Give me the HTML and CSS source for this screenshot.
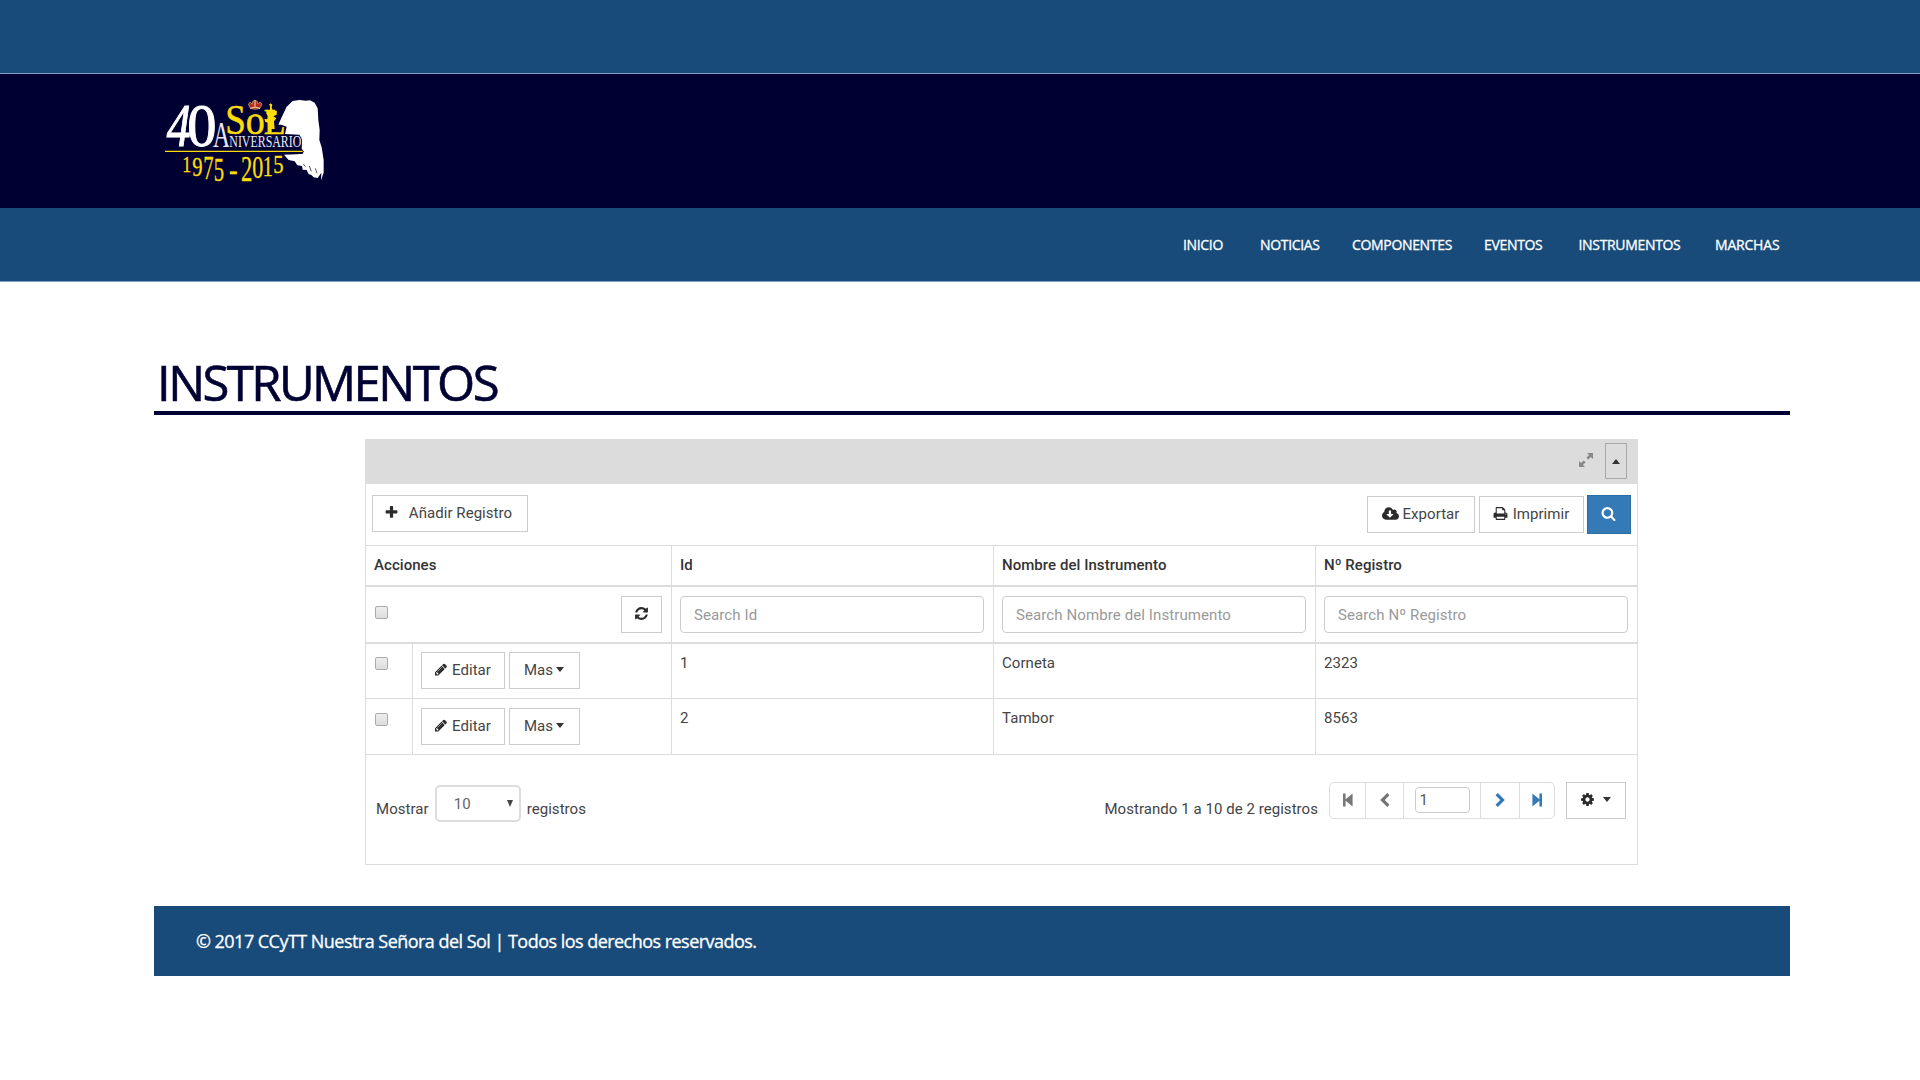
FILE: index.html
```html
<!DOCTYPE html>
<html lang="es">
<head>
<meta charset="utf-8">
<title>Instrumentos</title>
<link rel="stylesheet" href="styles.css">
</head>
<body>
<svg class="sprite" aria-hidden="true">
  <symbol id="plus" viewBox="0 0 1792 1792"><path d="M1600 736v192q0 40-28 68t-68 28h-416v416q0 40-28 68t-68 28h-192q-40 0-68-28t-28-68v-416h-416q-40 0-68-28t-28-68v-192q0-40 28-68t68-28h416v-416q0-40 28-68t68-28h192q40 0 68 28t28 68v416h416q40 0 68 28t28 68z"/></symbol>
  <symbol id="refresh" viewBox="0 0 1792 1792"><path d="M1639 1056q0 5-1 7-64 268-268 434.500t-478 166.500q-146 0-282.500-55t-243.500-157l-129 129q-19 19-45 19t-45-19-19-45v-448q0-26 19-45t45-19h448q26 0 45 19t19 45-19 45l-137 137q71 66 161 102t187 36q134 0 250-65t186-179q11-17 53-117 8-23 30-23h192q13 0 22.500 9.500t9.500 22.500zm25-800v448q0 26-19 45t-45 19h-448q-26 0-45-19t-19-45 19-45l138-138q-148-137-349-137-134 0-250 65t-186 179q-11 17-53 117-8 23-30 23h-199q-13 0-22.500-9.500t-9.500-22.500v-7q65-268 270-434.500t480-166.500q146 0 284 55.500t245 156.500l130-129q19-19 45-19t45 19 19 45z"/></symbol>
  <symbol id="search" viewBox="0 0 1792 1792"><path d="M1216 832q0-185-131.500-316.500t-316.500-131.500-316.500 131.500-131.500 316.500 131.500 316.500 316.500 131.500 316.500-131.500 131.500-316.500zm512 832q0 52-38 90t-90 38q-54 0-90-38l-343-342q-179 124-399 124-143 0-273.500-55.500t-225-150-150-225-55.500-273.500 55.500-273.500 150-225 225-150 273.500-55.500 273.500 55.500 225 150 150 225 55.500 273.500q0 220-124 399l343 343q37 37 37 90z"/></symbol>
  <symbol id="print" viewBox="0 0 1792 1792"><path d="M448 1536h896v-256h-896v256zm0-640h896v-384h-160q-40 0-68-28t-28-68v-160h-640v640zm1152 64q0-26-19-45t-45-19-45 19-19 45 19 45 45 19 45-19 19-45zm128 0v416q0 13-9.500 22.500t-22.500 9.500h-224v160q0 40-28 68t-68 28h-960q-40 0-68-28t-28-68v-160h-224q-13 0-22.500-9.500t-9.500-22.500v-416q0-79 56.500-135.500t135.500-56.500h64v-544q0-40 28-68t68-28h672q40 0 88 20t76 48l152 152q28 28 48 76t20 88v256h64q79 0 135.500 56.500t56.500 135.500z"/></symbol>
  <symbol id="pencil" viewBox="0 0 1792 1792"><path d="M491 1536l91-91-235-235-91 91v107h128v128h107zm523-928q0-22-22-22-10 0-17 7l-542 542q-7 7-7 17 0 22 22 22 10 0 17-7l542-542q7-7 7-17zm-54-192l416 416-832 832h-416v-416zm683 96q0 53-37 90l-166 166-416-416 166-165q36-38 90-38 53 0 91 38l235 234q37 39 37 91z"/></symbol>
  <symbol id="cog" viewBox="0 0 1792 1792"><path d="M1152 896q0-106-75-181t-181-75-181 75-75 181 75 181 181 75 181-75 75-181zm512-109v222q0 12-8 23t-20 13l-185 28q-19 54-39 91 35 50 107 138 10 12 10 25t-9 23q-27 37-99 108t-94 71q-12 0-26-9l-138-108q-44 23-91 38-16 136-29 186-7 28-36 28h-222q-14 0-24.500-8.500t-11.500-21.500l-28-184q-49-16-90-37l-141 107q-10 9-25 9-14 0-25-11-126-114-165-168-7-10-7-23 0-12 8-23 15-21 51-66.500t54-70.500q-27-50-41-99l-183-27q-13-2-21-12.500t-8-23.500v-222q0-12 8-23t19-13l186-28q14-46 39-92-40-57-107-138-10-12-10-24 0-10 9-23 26-36 98.500-107.500t94.500-71.500q13 0 26 10l138 107q44-23 91-38 16-136 29-186 7-28 36-28h222q14 0 24.500 8.500t11.500 21.500l28 184q49 16 90 37l142-107q9-9 24-9 13 0 25 10 129 119 165 170 7 8 7 22 0 12-8 23-15 21-51 66.500t-54 70.500q26 50 41 98l183 28q13 2 21 12.500t8 23.500z"/></symbol>
  <symbol id="cloud" viewBox="-64 0 1920 1792"><path d="M1216 928q0-14-9-23t-23-9h-224v-352q0-13-9.500-22.500t-22.500-9.500h-192q-13 0-22.500 9.500t-9.500 22.500v352h-224q-13 0-22.500 9.500t-9.500 22.500q0 14 9 23l352 352q9 9 23 9t23-9l351-351q10-12 10-24zm640 224q0 159-112.500 271.500t-271.500 112.500h-1088q-185 0-316.500-131.500t-131.500-316.500q0-130 70-240t188-165q-2-30-2-43 0-212 150-362t362-150q156 0 285.500 87t188.500 231q71-62 166-62 106 0 181 75t75 181q0 76-41 138 130 31 213.500 135.500t83.500 238.500z"/></symbol>
  <symbol id="expand" viewBox="0 0 14 14"><path d="M8 0h6v6l-2.100-2.100-2.700 2.700-1.800-1.800 2.700-2.700zM6 14H0V8l2.100 2.100 2.700-2.700 1.800 1.800-2.700 2.700z"/></symbol>
  <symbol id="chevron" viewBox="0 0 10 14"><path d="M7.200 0 9.500 2.300 4.800 7l4.700 4.700L7.200 14 .2 7z"/></symbol>
  <symbol id="step" viewBox="0 0 10 14"><path d="M0 .5h2.600V6.300L9.600.5v13L2.600 7.700v5.800H0z"/></symbol>
</svg>

<header>
  <div class="topbar"></div>
  <div class="brand">
    <svg class="logo" viewBox="66 102 495 270" role="img">
      <path fill="#fff" d="M458 123 478 120 498 122 510 121 524 128 533 145 535 180 539 210 538 240 545 262 551 300 551 338 543 361 544 338 533 354 521 352 513 344 506 343 500 330 488 329 486 318 472 316 464 304 446 300 432 284 470 283 486 281 492 275 485 266 486 240 478 224 435 222 440 200 424 194 415 194 424 174 440 140z"/>
      <path fill="none" stroke="#003" stroke-width="2" d="M508 318l6 16M526 325l5 15M490 312l6 8"/>
      <g font-family="Liberation Serif, serif">
        <g fill="#fff" stroke="#fff" stroke-width="3">
          <text x="80" y="257" font-size="184" font-style="italic" textLength="72" lengthAdjust="spacingAndGlyphs">4</text>
          <text x="142" y="257" font-size="184" textLength="88" lengthAdjust="spacingAndGlyphs">0</text>
        </g>
        <text x="219" y="260" font-size="107" textLength="51" lengthAdjust="spacingAndGlyphs" fill="#e8e8f0">A</text>
        <text x="268" y="260" font-size="49" textLength="216" lengthAdjust="spacingAndGlyphs" fill="#e8e8f0" stroke="#003" stroke-width="6" paint-order="stroke">NIVERSARIO</text>
        <g fill="#fddc0a" stroke="#fddc0a" stroke-width="1.500">
          <text x="256" y="221" font-size="129" textLength="62" lengthAdjust="spacingAndGlyphs">S</text>
          <text x="317" y="221" font-size="120" textLength="57" lengthAdjust="spacingAndGlyphs">o</text>
          <text x="371" y="221" font-size="110" textLength="66" lengthAdjust="spacingAndGlyphs">L</text>
        </g>
      </g>
      <path fill="#fddc0a" d="M384 207 385 188 376 186 373 176 381 178 387 172 378 160 383 149 390 154V138L387 134 392 130 397 134 395 142 399 154 411 152 410 164 400 169 409 175 402 184 404 207z"/>
      <path fill="#b52b20" stroke="#d8b080" stroke-width="2" d="M331 145L325 132 331 127 337 133 338 124 345 121 352 124 354 132 360 126 366 132 360 145Q345 151 331 145z"/>
      <path fill="none" stroke="#f6dfa6" stroke-width="3" d="M331 145Q345 138 360 145M345 120V140"/>
      <path fill="none" stroke="#003" stroke-width="8" d="M430 277H489"/>
      <path fill="none" stroke="#fddc0a" stroke-width="3.500" d="M75 274H488"/>
      <g font-family="Liberation Serif, serif" fill="#fddc0a" stroke="#fddc0a" stroke-width="1">
        <text x="127" y="336" font-size="70" textLength="27" lengthAdjust="spacingAndGlyphs">1</text>
        <text x="157" y="347" font-size="85" textLength="31" lengthAdjust="spacingAndGlyphs">9</text>
        <text x="190" y="357" font-size="98" textLength="31" lengthAdjust="spacingAndGlyphs">7</text>
        <text x="221" y="362" font-size="104" textLength="31" lengthAdjust="spacingAndGlyphs">5</text>
        <text x="267" y="360" font-size="90" textLength="26" lengthAdjust="spacingAndGlyphs">-</text>
        <text x="303" y="362" font-size="106" textLength="34" lengthAdjust="spacingAndGlyphs">2</text>
        <text x="337" y="354" font-size="95" textLength="33" lengthAdjust="spacingAndGlyphs">0</text>
        <text x="368" y="348" font-size="86" textLength="30" lengthAdjust="spacingAndGlyphs">1</text>
        <text x="400" y="338" font-size="74" textLength="31" lengthAdjust="spacingAndGlyphs">5</text>
      </g>
    </svg>
  </div>
  <nav>
    <a class="w1">INICIO</a><a class="w2">NOTICIAS</a><a class="w3">COMPONENTES</a><a class="w4">EVENTOS</a><a class="w5">INSTRUMENTOS</a><a class="w6">MARCHAS</a>
  </nav>
</header>

<main>
  <h1>INSTRUMENTOS</h1>
  <section class="panel">
    <div class="panel-head">
      <svg class="i-expand"><use href="#expand"/></svg>
      <button class="collapse"><span class="caret up"></span></button>
    </div>
    <div class="toolbar">
      <button class="btn add"><svg class="icon"><use href="#plus"/></svg>Añadir Registro</button>
      <div class="tools">
        <button class="btn export"><svg class="icon wide"><use href="#cloud"/></svg>Exportar</button>
        <button class="btn print"><svg class="icon"><use href="#print"/></svg>Imprimir</button>
        <button class="btn find"><svg class="icon"><use href="#search"/></svg></button>
      </div>
    </div>
    <div class="row head"><div>Acciones</div><div>Id</div><div>Nombre del Instrumento</div><div>Nº Registro</div></div>
    <div class="row filter">
      <div class="all"><span class="check"></span><button class="btn reload"><svg class="icon"><use href="#refresh"/></svg></button></div>
      <div><input placeholder="Search Id"></div>
      <div><input placeholder="Search Nombre del Instrumento"></div>
      <div><input placeholder="Search Nº Registro"></div>
    </div>
    <div class="row data">
      <div class="actions"><span class="pick"><span class="check"></span></span><span class="ops"><button class="btn edit"><svg class="icon"><use href="#pencil"/></svg>Editar</button><button class="btn more">Mas<span class="caret"></span></button></span></div>
      <div>1</div><div>Corneta</div><div>2323</div>
    </div>
    <div class="row data last">
      <div class="actions"><span class="pick"><span class="check"></span></span><span class="ops"><button class="btn edit"><svg class="icon"><use href="#pencil"/></svg>Editar</button><button class="btn more">Mas<span class="caret"></span></button></span></div>
      <div>2</div><div>Tambor</div><div>8563</div>
    </div>
    <div class="panel-foot">
      <div class="length"><span>Mostrar</span><span class="select">10<span class="caret tall"></span></span><span>registros</span></div>
      <div class="paging">
        <span class="info">Mostrando 1 a 10 de 2 registros</span>
        <div class="pager">
          <span class="p1"><svg><use href="#step"/></svg></span>
          <span class="p2"><svg><use href="#chevron"/></svg></span>
          <span class="p3"><input value="1"></span>
          <span class="p4 on"><svg><use href="#chevron"/></svg></span>
          <span class="p5 on"><svg><use href="#step"/></svg></span>
        </div>
        <button class="btn settings"><svg class="icon"><use href="#cog"/></svg><span class="caret"></span></button>
      </div>
    </div>
  </section>
</main>
<footer><span>© 2017 CCyTT Nuestra Señora del Sol | Todos los derechos reservados.</span></footer>
</body>
</html>
```
FILE: styles.css
```css
* { box-sizing: border-box; }
body { margin: 0; background: #fff; font-family: "Open Sans", "Noto Sans", sans-serif; }
.sprite { display: none; }
svg { fill: currentColor; flex: none; }

.topbar { height: 74px; background: #184b79; border-bottom: 1px solid #7f9fc4; }
.brand { height: 134px; background: #003; padding: 20px 0 0 162px; }
.logo { display: block; width: 165px; height: 90px; overflow: visible; }
nav { height: 74px; background: #184b79; border-bottom: 1px solid #7f9fc4; display: flex; justify-content: flex-end; align-items: center; padding-right: 133px; color: #fff; font-size: 14px; letter-spacing: -.33px; -webkit-text-stroke: .3px; white-space: nowrap; }
.w1 { width: 77px; }
.w2 { width: 92px; }
.w3 { width: 132px; }
.w4 { width: 94.500px; }
.w5 { width: 136.500px; }
.w6 { width: 72px; letter-spacing: -.2px; }

main { padding: 68px 130px 0 154px; }
h1 { margin: 0; height: 65px; padding-left: 3px; border-bottom: 4px solid #003; color: #003; font-size: 49px; font-weight: 400; line-height: 65px; letter-spacing: -2.550px; -webkit-text-stroke: .6px; }

.panel { width: 1273px; margin: 24px 0 0 211px; border: 1px solid #dcdcdc; font: 15px Roboto, sans-serif; letter-spacing: .05px; color: #444; }
.panel-head { height: 45px; margin-top: -1px; background: #dcdcdc; display: flex; justify-content: flex-end; align-items: center; padding: 0 10px 1px 0; gap: 12px; color: #888; }
.i-expand { width: 14px; height: 14px; margin-bottom: 2px; }
.collapse { width: 22px; height: 36px; padding: 0; background: #dcdcdc; border: 1px solid #aaa; display: flex; align-items: center; justify-content: center; color: #333; }
.caret { border: 4px solid transparent; border-top: 5px solid #333; border-bottom: 0; margin-left: 3px; }
.caret.up { border-top: 0; border-bottom: 5px solid #333; margin: 0; }
.caret.tall { border-width: 7px 3.500px 0; border-top-color: #444; }

.btn { height: 37px; padding: 0 1px 2px 0; background: #fff; border: 1px solid #ccc; color: #444; font: 15px Roboto, sans-serif; letter-spacing: .05px; display: flex; align-items: center; justify-content: center; white-space: nowrap; }
.icon { width: 15px; height: 15px; color: #2b2b2b; }
.toolbar { height: 62px; border-bottom: 1px solid #dcdcdc; padding: 11px 6px 0 6px; display: flex; justify-content: space-between; }
.add { width: 156px; gap: 10px; padding-right: 4px; }
.tools { display: flex; align-items: center; height: 39px; }
.export { width: 108px; gap: 4px; margin-right: 4px; }
.print { width: 105px; gap: 5px; margin-right: 3px; }
.wide { width: 17px; height: 16px; }
.find { width: 44px; height: 39px; background: #337ab7; border-color: #2e6da4; }
.find .icon { color: #fff; }

.row { display: grid; grid-template-columns: 305px 322px 322px 322px; }
.row > div { padding-left: 8px; border-left: 1px solid #dcdcdc; }
.row > div:first-child { border-left: 0; }
.head { height: 41px; border-bottom: 2px solid #dcdcdc; line-height: 38px; font-weight: 500; color: #333; }
.filter { height: 57px; border-bottom: 2px solid #dcdcdc; }
.filter > div { padding-top: 9px; }
.all { display: flex; justify-content: space-between; padding-right: 9px; }
.check { width: 13px; height: 13px; border: 1px solid #aaa; border-radius: 2px; background: linear-gradient(#eee, #dcdcdc); margin: 10px 0 0 1px; display: block; }
.reload { width: 41px; }
input { font: 15px Roboto, sans-serif; letter-spacing: .1px; color: #555; border: 1px solid #ccc; border-radius: 4px; background: #fff; }
.filter input { width: 304px; height: 37px; padding: 0 13px; }
input::placeholder { color: #999; opacity: 1; }
.data { height: 55px; border-bottom: 1px solid #dcdcdc; line-height: 19px; }
.data > div { padding-top: 10px; }
.data.last { height: 56px; }
.data > .actions { display: flex; padding: 0 0 0 8px; }
.pick { width: 39px; border-right: 1px solid #dcdcdc; padding-top: 3px; }
.ops { display: flex; gap: 4px; padding: 8px 0 0 8px; }
.last .ops { padding-top: 9px; }
.last .pick { padding-top: 4px; }
.edit { width: 84px; gap: 4px; }
.edit .icon { width: 14px; }
.more { width: 71px; }
.more .caret { border-left-width: 4.500px; border-right-width: 4.500px; }

.panel-foot { height: 109px; padding: 27px 11px 0 10px; display: flex; justify-content: space-between; }
.length { display: flex; gap: 6px; padding-top: 3px; line-height: 49px; }
.select { width: 86px; height: 37px; border: 2px solid #ddd; border-radius: 5px; display: flex; align-items: center; justify-content: space-between; padding: 0 6px 0 17px; line-height: 30px; color: #666; }
.paging { display: flex; }
.info { line-height: 54px; margin-right: 11px; }
.pager { display: flex; height: 37px; border: 1px solid #ddd; border-radius: 5px; margin-right: 11px; color: #777; }
.pager > span { display: flex; align-items: center; justify-content: center; border-left: 1px solid #ddd; padding-bottom: 2px; }
.pager > span:first-child { border-left: 0; }
.pager svg { width: 10px; height: 14px; }
.pager .on { color: #337ab7; }
.on svg { transform: scaleX(-1); }
.p1 { width: 35px; }
.p2 { width: 38px; }
.p3 { width: 77px; }
.p4 { width: 39px; }
.p5 { width: 35px; }
.p3 input { width: 55px; height: 26px; padding: 0 4px; }
.settings { width: 60px; gap: 5px; }

footer { margin: 41px 130px 0 154px; height: 70px; background: #184b79; color: #fff; font-size: 18px; line-height: 70px; padding-left: 42px; letter-spacing: -.53px; -webkit-text-stroke: .3px; white-space: nowrap; }
```
